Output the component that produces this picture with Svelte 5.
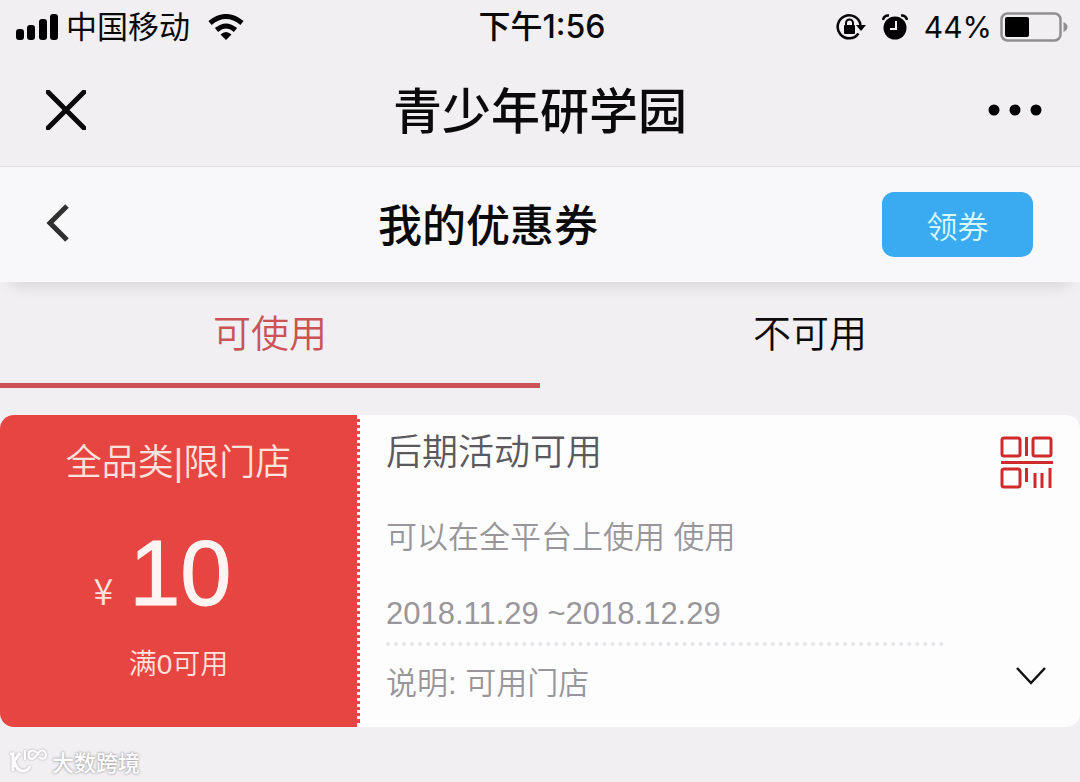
<script lang="ts">
	type Coupon = {
		scope: string;
		amount: number;
		threshold: string;
		title: string;
		usage: string;
		period: string;
		note: string;
	};

	const tabs = ['可使用', '不可用'];

	const coupons: Coupon[] = [
		{
			scope: '全品类|限门店',
			amount: 10,
			threshold: '满0可用',
			title: '后期活动可用',
			usage: '可以在全平台上使用 使用',
			period: '2018.11.29 ~2018.12.29',
			note: '说明: 可用门店'
		}
	];

	let activeTab = $state(0);
</script>

<div class="status-bar">
	<div class="status-left">
		<svg class="signal" viewBox="0 0 42 26" aria-hidden="true">
			<rect x="0" y="15" width="8" height="11" rx="3" />
			<rect x="11" y="11" width="8" height="15" rx="3" />
			<rect x="23" y="5" width="8" height="21" rx="3" />
			<rect x="34" y="0" width="8" height="26" rx="3" />
		</svg>
		<span>中国移动</span>
		<svg class="wifi" viewBox="0 0 36 26" aria-hidden="true">
			<path d="M2 9Q18-4 34 9M8.500 16Q18 8 27.500 16" fill="none" stroke="#050505" stroke-width="5" />
			<path d="M12.500 20.500Q18 15.500 23.500 20.500L18 26Z" />
		</svg>
	</div>
	<span class="time">下午1:56</span>
	<div class="status-right">
		<svg class="lock" viewBox="0 0 30 28" aria-hidden="true">
			<path d="M24.500 12A11.500 11.500 0 1 0 22.500 20.500" fill="none" stroke="#050505" stroke-width="2.500" />
			<path d="M20 12H30L25 18Z" />
			<rect x="8" y="12" width="11" height="9" rx="1" />
			<path d="M10 13V10A3.500 3.500 0 0 1 17 10V13" fill="none" stroke="#050505" stroke-width="2" />
		</svg>
		<svg class="alarm" viewBox="0 0 26 26" aria-hidden="true">
			<circle cx="13" cy="14" r="11.500" />
			<path d="M1 6Q2 1 7 1.500M25 6Q24 1 19 1.500" fill="none" stroke="#050505" stroke-width="2.500" />
			<path d="M14 7V15H8" fill="none" stroke="#f2f0f3" stroke-width="2" />
		</svg>
		<span>44%</span>
		<svg class="battery" viewBox="0 0 68 30" aria-hidden="true">
			<rect x="1.500" y="1.500" width="59" height="27" rx="6" fill="none" stroke="#8f8f90" stroke-width="2.500" />
			<rect x="5" y="5" width="24" height="20" rx="2" />
			<path d="M63.500 10Q67.500 12 67.500 15T63.500 20Z" fill="#8f8f90" />
		</svg>
	</div>
</div>

<header class="app-bar">
	<button class="icon-button" aria-label="关闭">
		<svg class="close" viewBox="0 0 40 40">
			<path d="M2 2L38 38M38 2L2 38" fill="none" stroke="#0a0a0a" stroke-width="5" stroke-linecap="round" />
		</svg>
	</button>
	<h1>青少年研学园</h1>
	<button class="icon-button right" aria-label="更多">
		<svg class="more" viewBox="0 0 54 12">
			<circle cx="6" cy="6" r="5.500" />
			<circle cx="27" cy="6" r="5.500" />
			<circle cx="48" cy="6" r="5.500" />
		</svg>
	</button>
</header>

<nav class="page-bar">
	<button class="icon-button back-button" aria-label="返回">
		<svg class="back" viewBox="0 0 24 40">
			<path d="M21 3L4 20L21 37" fill="none" stroke="#303030" stroke-width="5" />
		</svg>
	</button>
	<h2>我的优惠券</h2>
	<button class="claim">领券</button>
</nav>

<div class="tabs" role="tablist">
	{#each tabs as tab, i}
		<button
			role="tab"
			class="tab"
			class:active={activeTab === i}
			aria-selected={activeTab === i}
			onclick={() => (activeTab = i)}
		>
			{tab}
		</button>
	{/each}
</div>

<main>
	{#each coupons as c}
		<article class="coupon">
			<div class="value">
				<p class="scope">{c.scope}</p>
				<p class="amount"><span>¥</span><strong>{c.amount}</strong></p>
				<p class="threshold">{c.threshold}</p>
			</div>
			<div class="details">
				<div class="info">
					<h3>{c.title}</h3>
					<p class="usage">{c.usage}</p>
					<p class="period">{c.period}</p>
					<p class="note">{c.note}</p>
				</div>
				<div class="actions">
					<button class="icon-button" aria-label="二维码">
						<svg class="qr" viewBox="0 0 54 54" fill="none" stroke="#cf2b2d" stroke-width="3">
							<rect x="2" y="2" width="18" height="18" rx="2" />
							<rect x="33" y="2" width="18" height="18" rx="2" />
							<rect x="2" y="33" width="18" height="18" rx="2" />
							<path d="M26.500 1V20M1 26.500H53M26.500 32V46M35 37V52M42 37V52M50 32V52" />
						</svg>
					</button>
					<button class="icon-button" aria-label="展开">
						<svg class="expand" viewBox="0 0 32 20">
							<path d="M2 2L16 17L30 2" fill="none" stroke="#111" stroke-width="2.500" />
						</svg>
					</button>
				</div>
			</div>
		</article>
	{/each}
</main>

<footer>
	<svg class="brand" viewBox="0 0 40 28" fill="none" stroke="#fff" stroke-width="3" aria-hidden="true">
		<path d="M2 7H5V24M12 6L6 14Q9 24 15 24Q20 24 22 19" />
		<path d="M17 3V13M31 8C27 3 25 3 23 4C19 6 20 12 24 12C27 12 28 8 31 5C34 2 38 4 38 8C38 12 34 13 31 10" stroke-width="2" />
	</svg>
	<span>大数跨境</span>
</footer>

<style>
	:global(body) {
		margin: 0;
		background: #f1eff2;
		color: #0a0a0a;
		font-family: 'Liberation Sans', 'Noto Sans CJK SC', sans-serif;
	}

	h1, h2, h3, p {
		margin: 0;
		font-weight: 400;
	}

	button {
		padding: 0;
		border: none;
		background: none;
		color: inherit;
		font-family: inherit;
		cursor: pointer;
	}

	svg {
		display: block;
		flex: none;
	}

	.status-bar {
		display: grid;
		grid-template-columns: 1fr auto 1fr;
		align-items: center;
		height: 54px;
		padding: 0 12px 0 16px;
		font-family: Inter, 'Noto Sans CJK SC', sans-serif;
		font-size: 31px;
		line-height: 40px;
	}

	.status-left, .status-right {
		display: flex;
		align-items: center;
		gap: 8px;
	}

	.status-right {
		justify-content: flex-end;
		font-size: 30px;
	}

	.time {
		font-size: 32px;
		font-weight: 500;
	}

	.signal {
		width: 42px;
		height: 26px;
	}

	.wifi {
		width: 36px;
		height: 26px;
		margin-left: 10px;
	}

	.lock {
		width: 30px;
		height: 28px;
		margin-right: 8px;
	}

	.alarm {
		width: 26px;
		height: 26px;
		margin-right: 8px;
	}

	.battery {
		width: 68px;
		height: 30px;
	}

	.app-bar {
		display: grid;
		grid-template-columns: 1fr auto 1fr;
		align-items: center;
		height: 112px;
		padding: 0 38px;
		border-bottom: 1px solid #dfdde0;
	}

	.app-bar .icon-button {
		padding: 0 0 0 8px;
	}

	h1, h2 {
		padding-bottom: 4px;
		font-family: 'Noto Sans CJK SC', sans-serif;
		line-height: 56px;
		font-weight: 500;
	}

	h1 {
		font-size: 49px;
	}

	h2 {
		font-size: 44px;
	}

	.page-bar {
		display: flex;
		align-items: center;
		justify-content: space-between;
		height: 115px;
		padding: 0 47px 0 46px;
		background: #f8f7fa;
		box-shadow: 0 14px 16px -12px rgba(0, 0, 0, 0.14);
	}

	.icon-button.right {
		justify-self: end;
	}

	.back-button {
		width: 48px;
		padding-bottom: 4px;
	}

	.close {
		width: 40px;
		height: 40px;
	}

	.more {
		width: 54px;
		height: 12px;
	}

	.back {
		width: 24px;
		height: 40px;
	}

	.claim {
		width: 151px;
		height: 65px;
		border-radius: 12px;
		background: #3aabf0;
		color: #d8f8ff;
		font-size: 31px;
		font-weight: 350;
	}

	.tabs {
		display: grid;
		grid-template-columns: 1fr 1fr;
	}

	.tab {
		height: 106px;
		padding-bottom: 4px;
		border-bottom: 5px solid transparent;
		font-family: 'Noto Sans CJK SC', sans-serif;
		font-size: 38px;
		font-weight: 350;
	}

	.tab.active {
		border-color: #cb5356;
		color: #cb5356;
	}

	main {
		padding-top: 27px;
	}

	.coupon {
		display: flex;
		min-height: 312px;
		border-radius: 14px;
		background: #fefdfe;
		overflow: hidden;
	}

	.value {
		flex: 0 0 calc(100% / 3);
		box-sizing: border-box;
		display: flex;
		flex-direction: column;
		align-items: center;
		border-right: 3px dotted #fefdfe;
		background: #e64542;
		color: #ffe2dd;
	}

	.scope {
		padding-top: 20px;
		font-size: 36px;
		line-height: 56px;
		font-weight: 350;
	}

	.amount {
		display: flex;
		align-items: baseline;
		gap: 16px;
		margin: 26px 32px 20px 0;
		line-height: 112px;
	}

	.amount span {
		font-family: 'Noto Sans CJK SC', sans-serif;
		font-size: 36px;
		line-height: 32px;
		font-weight: 350;
	}

	.amount strong {
		color: #fff4f2;
		font-size: 92px;
		font-weight: 400;
		-webkit-text-stroke: 1px #fff4f2;
	}

	.threshold {
		font-size: 28px;
		line-height: 32px;
		font-weight: 350;
	}

	.details {
		flex: 1;
		display: flex;
		justify-content: space-between;
		padding: 0 26px;
	}

	.info {
		flex: 0 1 558px;
		color: #98969a;
		font-size: 31px;
		line-height: 40px;
	}

	.info p {
		font-weight: 350;
	}

	h3 {
		padding-top: 10px;
		color: #5b595d;
		font-size: 36px;
		line-height: 56px;
		font-weight: 350;
	}

	.usage {
		padding-top: 37px;
	}

	.period {
		padding: 36px 0 8px;
		border-bottom: 4px dotted #e6e4e8;
	}

	.note {
		padding-top: 18px;
	}

	.actions {
		display: flex;
		flex-direction: column;
		align-items: flex-end;
		justify-content: space-between;
		padding: 21px 0 41px;
	}

	.qr {
		width: 54px;
		height: 54px;
	}

	.expand {
		width: 46px;
		height: 20px;
	}

	footer {
		display: flex;
		align-items: center;
		gap: 4px;
		padding: 18px 8px 0;
		color: #fff;
		font-family: 'Noto Sans CJK SC', sans-serif;
		font-size: 22px;
		line-height: 32px;
		font-weight: 500;
		text-shadow: 0 0 3px #a5a3a7, 0 0 2px #a5a3a7;
	}

	.brand {
		width: 40px;
		height: 28px;
		filter: drop-shadow(0 0 1px #a5a3a7);
	}
</style>
